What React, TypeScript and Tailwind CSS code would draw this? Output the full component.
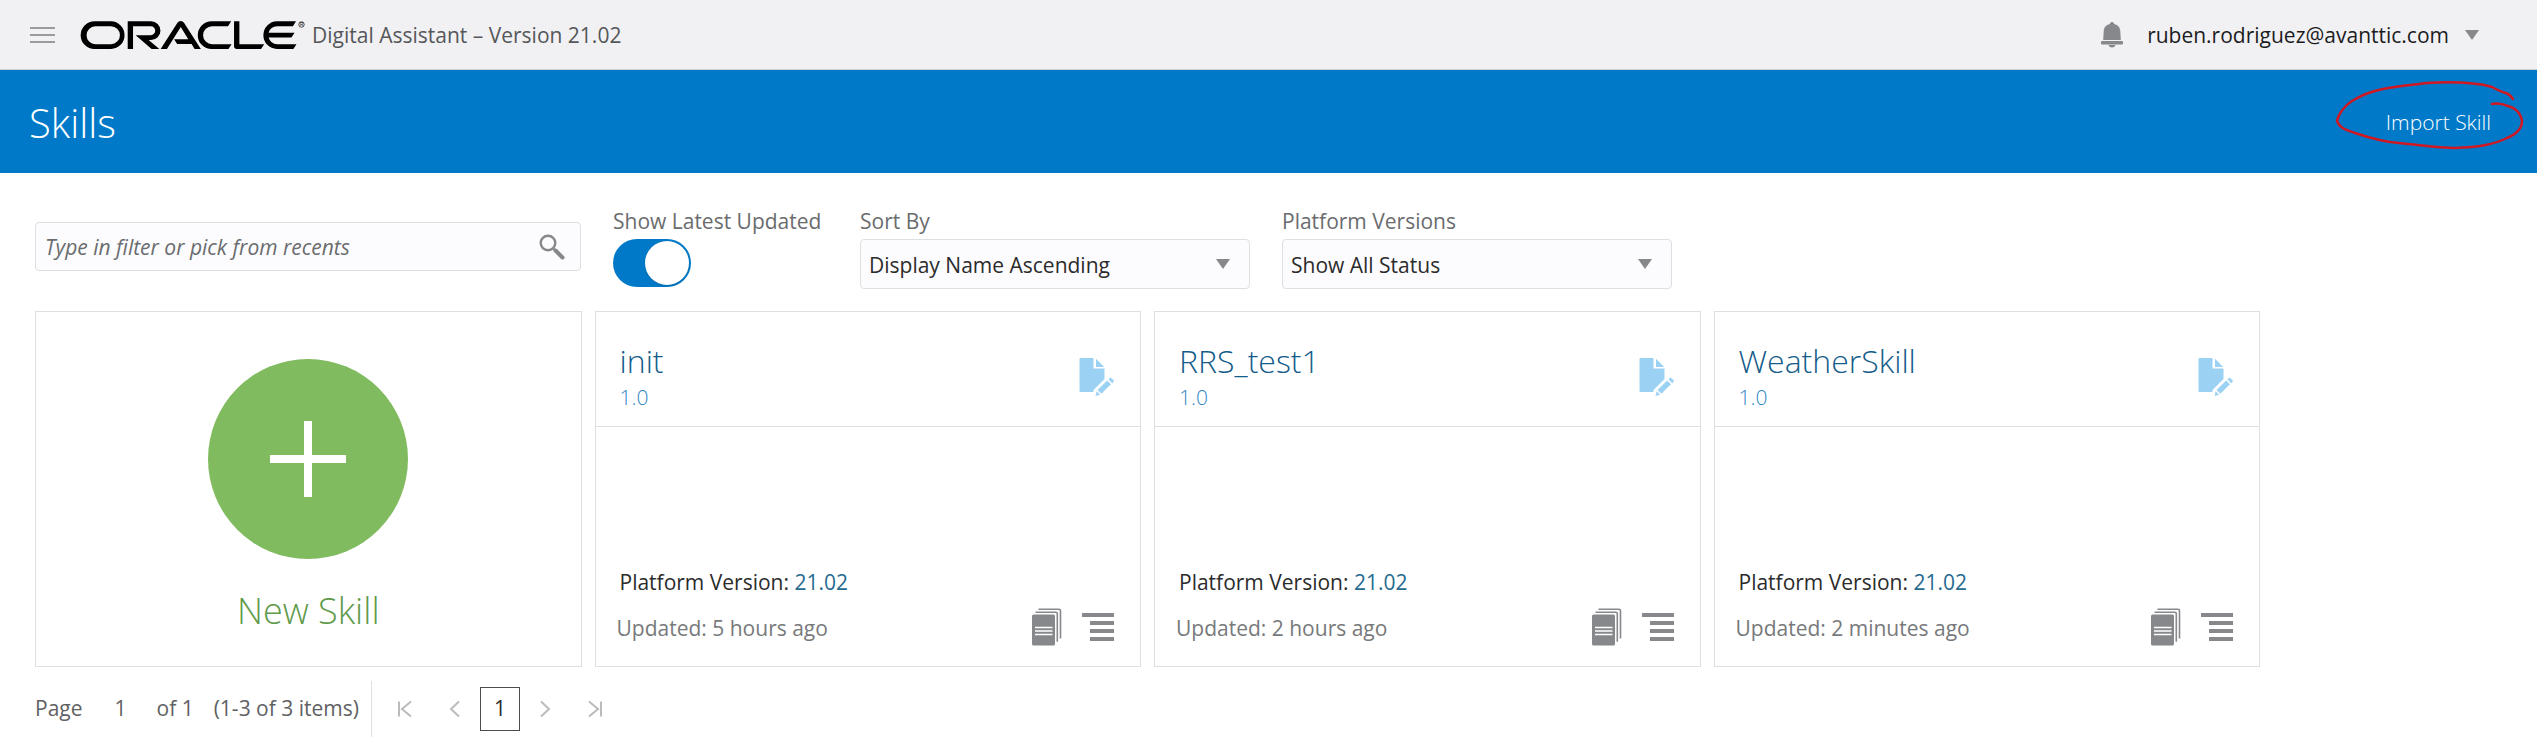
import { useState } from "react";

const skills = [
  { name: "init", version: "1.0", platform: "21.02", updated: "5 hours ago" },
  { name: "RRS_test1", version: "1.0", platform: "21.02", updated: "2 hours ago" },
  { name: "WeatherSkill", version: "1.0", platform: "21.02", updated: "2 minutes ago" },
];

function OracleLogo() {
  return (
    <svg className="h-8 w-[226px] shrink-0" viewBox="0 0 226 32" role="img" aria-label="Oracle">
      <g transform="translate(1 2) scale(0.934)">
        <path d="M99.61,19.52h15.24l-8.05-13L92,30H85.27l18-28.17a4.29,4.29,0,0,1,7-.05L128.32,30h-6.73l-3.17-5.25H103l-3.36-5.23m69.93,5.23V0.28h-5.72V27.16a2.76,2.76,0,0,0,.85,2,2.89,2.89,0,0,0,2.08.87h26l3.39-5.25H169.54M75,20.38A10,10,0,0,0,75,.28H50V30h5.71V5.54H74.65a4.81,4.81,0,0,1,0,9.62H58.54L75.6,30h8.29L72.43,20.38H75M14.88,30H32.15a14.86,14.86,0,0,0,0-29.71H14.88a14.86,14.86,0,1,0,0,29.71m16.88-5.23H15.26a9.62,9.62,0,0,1,0-19.23h16.5a9.62,9.62,0,1,1,0,19.23M140.25,30h17.63l3.34-5.23H140.64a9.62,9.62,0,1,1,0-19.23h16.75l3.38-5.25H140.25a14.86,14.86,0,1,0,0,29.71m69.87-5.23a9.62,9.62,0,0,1-9.26-7h24.42l3.36-5.24H200.86a9.61,9.61,0,0,1,9.26-7h16.76l3.35-5.25h-20.5a14.86,14.86,0,0,0,0,29.71h17.63l3.35-5.23h-20.6" />
      </g>
      <circle cx="221.5" cy="5.5" r="2.7" fill="none" stroke="#000" strokeWidth="0.7" />
      <text x="221.5" y="7.2" fontSize="4.5" textAnchor="middle" fontFamily="Liberation Sans, sans-serif">R</text>
    </svg>
  );
}

function BellIcon() {
  return (
    <svg className="h-[26px] w-6 text-[#86888b]" viewBox="0 0 24 26" fill="currentColor" aria-hidden="true">
      <path d="M12 0c1.300 0 1.900.8 2.100 2 4 .9 6 3.600 6.200 7.200L20.800 18H3.200l.5-8.800C3.900 5.600 5.900 2.900 9.900 2 10.100.8 10.700 0 12 0Z" />
      <rect x="1" y="19" width="22" height="3.400" rx="1.200" />
      <path d="M8.500 23h7c-.6 1.700-1.800 2.500-3.500 2.500S9.100 24.700 8.500 23Z" />
    </svg>
  );
}

function Caret() {
  return (
    <svg className="h-[10px] w-[14px] shrink-0 text-[#86888b]" viewBox="0 0 14 10" fill="currentColor" aria-hidden="true">
      <path d="M0 0h14L7 10Z" />
    </svg>
  );
}

function SearchIcon() {
  return (
    <svg className="size-[26px]" viewBox="0 0 26 26" fill="none" stroke="#86888b" aria-hidden="true">
      <circle cx="9" cy="9" r="7.300" strokeWidth="2.400" />
      <path d="M16.500 16.500 23.500 23.500" strokeWidth="4" strokeLinecap="round" />
      <path d="m14 14 3 3" strokeWidth="2" />
    </svg>
  );
}

function EditDocIcon() {
  return (
    <svg className="h-[39px] w-9" viewBox="0 0 36 39" fill="#9bd2f4" aria-hidden="true">
      <path d="M1.500 0H14.500V10.500H25.500V21L14.500 32V34H1.500A1 1 0 0 1 .500 33V1A1 1 0 0 1 1.500 0Z" />
      <path d="M17 .800 25.200 9H17Z" />
      <path d="m28.200 22.500 3.800 3.800L22.300 35.700 18.500 32Z" />
      <path d="m29.400 21.300 1.200-1.100c.6-.5 1.300-.5 1.900 0l1.900 1.900c.6.6.6 1.300 0 1.900l-1.200 1.200Z" />
      <path d="m17.600 33.300 3.500 3.400-4.600 1.400Z" />
    </svg>
  );
}

function VersionsIcon() {
  return (
    <svg className="h-[38px] w-[30px]" viewBox="0 0 30 38" aria-hidden="true">
      <path d="M6.500 1.200H27A1.500 1.500 0 0 1 28.500 2.700V30.500" fill="none" stroke="#86888b" strokeWidth="1.600" />
      <path d="M3.500 4.200H23.800A1.500 1.500 0 0 1 25.300 5.700V33.800" fill="none" stroke="#86888b" strokeWidth="1.600" />
      <rect x="0" y="6.500" width="23" height="31" rx="1.500" fill="#86888b" />
      <path d="M3 19.500H20.500M3 23H20.500M3 26.500H20.500" stroke="#fff" strokeWidth="1.500" />
    </svg>
  );
}

function DetailsIcon() {
  return (
    <svg className="h-7 w-8" viewBox="0 0 32 28" fill="#86888b" aria-hidden="true">
      <rect x="0" y="0" width="32" height="4" />
      <rect x="8" y="8" width="24" height="4" />
      <rect x="8" y="16" width="24" height="4" />
      <rect x="8" y="24" width="24" height="4" />
    </svg>
  );
}

function PageArrow({ d, label }: { d: string; label: string }) {
  return (
    <button aria-label={label} className="flex size-5 items-center justify-center">
      <svg className="size-5" viewBox="0 0 20 20" fill="none" stroke="#b9bbbd" strokeWidth="2" aria-hidden="true">
        <path d={d} />
      </svg>
    </button>
  );
}

function SelectField({ id, label, options }: { id: string; label: string; options: string[] }) {
  return (
    <div className="w-[390px]">
      <label htmlFor={id} className="mb-[2px] block leading-8 text-[#6a6c6e]">
        {label}
      </label>
      <div className="relative">
        <select
          id={id}
          className="h-[50px] w-full appearance-none rounded-sm border border-[#dedfe1] bg-[#fcfcfe] pt-1 pr-12 pl-[8px] text-[#2b2b2b]"
        >
          {options.map((option) => (
            <option key={option}>{option}</option>
          ))}
        </select>
        <span className="pointer-events-none absolute inset-y-0 right-5 flex items-center">
          <Caret />
        </span>
      </div>
    </div>
  );
}

function SkillCard({ skill }: { skill: (typeof skills)[number] }) {
  return (
    <article className="flex h-[356px] flex-col border border-[#dedfe1]">
      <header className="flex h-[115px] items-start justify-between border-b border-[#dedfe1] pt-7 pr-[25px] pl-6">
        <div>
          <h2 className="text-[32px] leading-[42px] font-light text-[#145c8a]">{skill.name}</h2>
          <p className="leading-[30px] font-light text-[#2f86c6]">{skill.version}</p>
        </div>
        <button aria-label={`Edit ${skill.name}`} className="mt-[18px]">
          <EditDocIcon />
        </button>
      </header>
      <div className="mt-auto pr-[26px] pb-5 pl-6">
        <p className="leading-8 text-[#2b2b2b]">
          Platform Version: <span className="text-[#256b90]">{skill.platform}</span>
        </p>
        <div className="mt-[10px] flex items-center justify-between">
          <p className="-ml-[3px] pt-[2px] leading-9 text-[#77797b]">Updated: {skill.updated}</p>
          <div className="flex items-center gap-5">
            <button aria-label="Versions">
              <VersionsIcon />
            </button>
            <button aria-label="Details">
              <DetailsIcon />
            </button>
          </div>
        </div>
      </div>
    </article>
  );
}

export default function App() {
  const [latest, setLatest] = useState(true);
  return (
    <div className="min-h-screen bg-white font-['Open_Sans','Noto_Sans',sans-serif] text-[21px] text-[#5f6163]">
      <header className="flex h-[70px] items-center border-b border-[#cfd0d3] bg-[#f1f1f3] pr-[58px] pl-[30px]">
        <button aria-label="Menu" className="flex w-[25px] flex-col gap-[5px]">
          <span className="h-[2px] bg-[#9a9b9e]" />
          <span className="h-[2px] bg-[#9a9b9e]" />
          <span className="h-[2px] bg-[#9a9b9e]" />
        </button>
        <div className="ml-[25px] flex items-center gap-[6px]">
          <OracleLogo />
          <span className="pt-[2px] text-[#55575a]">Digital Assistant – Version 21.02</span>
        </div>
        <div className="ml-auto flex items-center">
          <button aria-label="Notifications" className="mr-[23px]">
            <BellIcon />
          </button>
          <button className="flex items-center gap-4 text-[#1c1c1e]">
            <span className="pt-[3px]">ruben.rodriguez@avanttic.com</span>
            <Caret />
          </button>
        </div>
      </header>

      <section className="flex h-[103px] items-center justify-between bg-[#007ac8] pt-[2px] pr-[46px] pl-[29px] text-white">
        <h1 className="text-[40px] font-light">Skills</h1>
        <div className="relative">
          <button className="font-light">Import Skill</button>
          <svg
            className="pointer-events-none absolute -top-[26px] -right-[34px] h-[70px] w-[190px]"
            viewBox="0 0 190 70"
            fill="none"
            stroke="#d01822"
            strokeWidth="2.500"
            strokeLinecap="round"
            aria-hidden="true"
          >
            <path d="M178 18C176 15 174 13 171 12C166 11 161 8 157 6C151 4 145 3 138 2.500C122 1 107 1 92 2C77 4 62 5 48 8C33 11 25 15 17 20C9 25 3 34 2 40C5 48 12 49 20 52C35 57 48 61 64 62C86 64 103 67 120 67C143 66 158 64 172 57C184 52 187 46 187 40C186 33 181 27 173 25C168 23 162 22 157 23" />
          </svg>
        </div>
      </section>

      <main className="px-[35px] pt-8">
        <div className="flex items-start">
          <div className="mt-[17px] flex h-[49px] w-[546px] items-center rounded-sm border border-[#dedfe1] bg-[#fcfcfe] pr-[15px] pl-[9px]">
            <input
              aria-label="Filter skills"
              placeholder="Type in filter or pick from recents"
              className="min-w-0 flex-1 bg-transparent pt-[3px] italic outline-none placeholder:text-[#6a6c6e]"
            />
            <button aria-label="Search">
              <SearchIcon />
            </button>
          </div>
          <label className="ml-8 flex w-[215px] flex-col gap-[2px] leading-8 text-[#6a6c6e]">
            Show Latest Updated
            <input
              type="checkbox"
              role="switch"
              checked={latest}
              onChange={(e) => setLatest(e.target.checked)}
              className="h-[48px] w-[78px] appearance-none rounded-full bg-[#9a9b9e] p-[2px] before:block before:size-[44px] before:rounded-full before:bg-white before:shadow-sm checked:bg-[#007ac8] checked:before:ml-[30px]"
            />
          </label>
          <div className="ml-8 flex gap-8">
            <SelectField
              id="sort-by"
              label="Sort By"
              options={["Display Name Ascending", "Display Name Descending"]}
            />
            <SelectField id="platform-versions" label="Platform Versions" options={["Show All Status"]} />
          </div>
        </div>

        <div className="mt-[22px] grid max-w-[2225px] grid-cols-4 gap-[13px]">
          <button className="flex h-[356px] flex-col items-center border border-[#dedfe1] pt-[47px]">
            <span className="flex size-[200px] items-center justify-center rounded-full bg-[#81bb5f]">
              <svg className="size-[76px]" viewBox="0 0 76 76" stroke="#fff" strokeWidth="8" aria-hidden="true">
                <path d="M38 0V76M0 38H76" />
              </svg>
            </span>
            <span className="mt-7 text-[36px] leading-[48px] font-light text-[#5f9a4a]">New Skill</span>
          </button>
          {skills.map((skill) => (
            <SkillCard key={skill.name} skill={skill} />
          ))}
        </div>

        <nav aria-label="Pagination" className="mt-[14px] flex h-[56px] items-center">
          <label htmlFor="page">Page</label>
          <input id="page" defaultValue="1" className="ml-[14px] w-12 bg-transparent text-center outline-none" />
          <span className="ml-3">of 1</span>
          <span className="ml-5">(1-3 of 3 items)</span>
          <span className="ml-3 h-full w-px bg-[#dedfe1]" />
          <div className="ml-[23px] flex items-center">
            <PageArrow label="First page" d="M4 2.500V17.500M16 2.500 7 10 16 17.500" />
            <span className="w-[30px]" />
            <PageArrow label="Previous page" d="M14 2.500 6 10 14 17.500" />
            <button aria-current="page" className="mx-[15px] h-11 w-10 border border-[#4a4c4e] text-[#2b2b2b]">
              1
            </button>
            <PageArrow label="Next page" d="M6 2.500 14 10 6 17.500" />
            <span className="w-[30px]" />
            <PageArrow label="Last page" d="M16 2.500V17.500M4 2.500 13 10 4 17.500" />
          </div>
        </nav>
      </main>
    </div>
  );
}
